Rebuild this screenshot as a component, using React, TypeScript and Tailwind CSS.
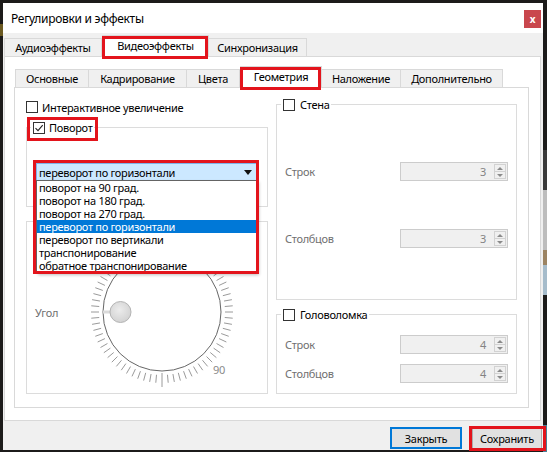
import React from 'react';

const Check = ({ checked }: { checked?: boolean }) => (
  <span className="w-[12px] h-[12px] shrink-0 border border-[#333333] bg-white flex items-center justify-center">
    {checked && (
      <svg width="10" height="10" viewBox="0 0 10 10">
        <path d="M1.5 5.2 L4 7.7 L8.7 2.2" fill="none" stroke="#222" strokeWidth="1.1" />
      </svg>
    )}
  </span>
);

const Spin = ({ value }: { value: string }) => (
  <div className="w-[108px] h-[19px] border border-[#cccccc] bg-[#f0f0f0] flex items-center">
    <span className="flex-1 text-right pr-[8px] text-[#838383]">{value}</span>
    <div className="w-[12px] h-[15px] mr-[1px] border border-[#d2d2d2] flex flex-col">
      <div className="flex-1 flex items-center justify-center border-b border-[#d2d2d2]">
        <svg width="6" height="3" viewBox="0 0 6 3">
          <path d="M0 3 L3 0 L6 3 Z" fill="#8a8a8a" />
        </svg>
      </div>
      <div className="flex-1 flex items-center justify-center">
        <svg width="6" height="3" viewBox="0 0 6 3">
          <path d="M0 0 L6 0 L3 3 Z" fill="#8a8a8a" />
        </svg>
      </div>
    </div>
  </div>
);

const SpinRow = ({ label, value, className }: { label: string; value: string; className: string }) => (
  <div className={`flex items-center justify-between pl-[8px] pr-[8px] ${className}`}>
    <span className="text-[#707070]">{label}</span>
    <Spin value={value} />
  </div>
);

const RedBox = ({ className }: { className: string }) => (
  <div className={`absolute border-[3px] border-[#e3141c] pointer-events-none z-30 ${className}`} />
);

const Dial = () => {
  const cx = 85;
  const cy = 85;
  const ticks = Array.from({ length: 72 }, (_, i) => {
    const a = (i * 5 * Math.PI) / 180;
    const long = i === 18;
    const r1 = long ? 61 : 63;
    const r2 = long ? 75 : 71;
    return {
      x1: cx + Math.cos(a) * r1,
      y1: cy + Math.sin(a) * r1,
      x2: cx + Math.cos(a) * r2,
      y2: cy + Math.sin(a) * r2,
    };
  });
  return (
    <svg width="170" height="170" viewBox="0 0 170 170">
      <defs>
        <radialGradient id="knob" cx="45%" cy="40%" r="60%">
          <stop offset="0%" stopColor="#ececec" />
          <stop offset="100%" stopColor="#d2d2d2" />
        </radialGradient>
      </defs>
      {ticks.map((t, i) => (
        <line key={i} x1={t.x1} y1={t.y1} x2={t.x2} y2={t.y2} stroke="#9a9a9a" strokeWidth="1" />
      ))}
      <circle cx={cx} cy={cy} r="59" fill="white" stroke="#555" strokeWidth="0.9" />
      <line x1="26" y1="85" x2="34" y2="85" stroke="#dadada" strokeWidth="3" />
      <circle cx="43.5" cy="85" r="10.5" fill="url(#knob)" stroke="#b4b4b4" strokeWidth="1" />
      <text x="136" y="147" fontSize="11" fill="#8a8a8a" fontFamily="Noto Sans, sans-serif">
        90
      </text>
    </svg>
  );
};

const dropdownItems = [
  'поворот на 90 град.',
  'поворот на 180 град.',
  'поворот на 270 град.',
  'переворот по горизонтали',
  'переворот по вертикали',
  'транспонирование',
  'обратное транспонирование',
];

const outerTabs = [
  { label: 'Аудиоэффекты', w: 'w-[98px]' },
  { label: 'Видеоэффекты', w: 'w-[107px]', active: true },
  { label: 'Синхронизация', w: 'w-[98px]' },
];

const innerTabs = [
  { label: 'Основные', w: 'w-[74px]' },
  { label: 'Кадрирование', w: 'w-[98px]' },
  { label: 'Цвета', w: 'w-[53px]' },
  { label: 'Геометрия', w: 'w-[82px]', active: true },
  { label: 'Наложение', w: 'w-[79px]' },
  { label: 'Дополнительно', w: 'w-[102px]' },
];

const Tab = ({ label, w, active, first }: { label: string; w: string; active?: boolean; first?: boolean }) =>
  active ? (
    <div className={`relative z-10 -mb-px h-[22px] ${w} bg-white border border-b-0 border-[#d9d9d9] flex items-center justify-center pb-[2px]`}>
      {label}
      <RedBox className="left-[-1px] right-0 top-0 bottom-[-2px]" />
    </div>
  ) : (
    <div
      className={`h-[18px] ${w} bg-[#f0f0f0] border-t border-r ${first ? 'border-l' : ''} border-[#d9d9d9] flex items-center justify-center`}
    >
      {label}
    </div>
  );

export default function App() {
  return (
    <div className="w-[547px] h-[452px] bg-[#1c1b1a] flex overflow-hidden text-[11px] tracking-[-0.3px] text-black font-['Noto_Sans',sans-serif] leading-none">
      <div className="w-[3px] flex flex-col">
        <div className="h-[24px]" />
        <div className="h-[12px] bg-[#6b5a22]" />
      </div>

      <div className="mt-[3px] w-[540px] h-[447px] bg-[#f0f0f0] flex flex-col shrink-0">
        {/* title bar */}
        <div className="h-[30px] bg-white flex items-center justify-between pl-[8px] pr-[2px] pt-[2px] text-[12px]">
          <span>Регулировки и эффекты</span>
          <div className="w-[17px] h-[18px] bg-[#c9474d] text-white text-[10px] font-bold flex items-center justify-center">x</div>
        </div>

        {/* outer tabs */}
        <div className="h-[23px] flex items-end pl-[1px]">
          {outerTabs.map((t, i) => (
            <Tab key={t.label} {...t} first={i === 0} />
          ))}
        </div>

        <div className="ml-[1px] w-[537px] h-[365px] border border-[#d9d9d9] bg-white flex flex-col">
          {/* inner tabs */}
          <div className="h-[30px] flex items-end pl-[10px]">
            {innerTabs.map((t, i) => (
              <Tab key={t.label} {...t} first={i === 0} />
            ))}
          </div>

          <div className="ml-[9px] w-[515px] h-[321px] border border-[#d9d9d9] flex gap-[8px] pl-[11px]">
            {/* left column */}
            <div className="w-[242px] flex flex-col">
              <div className="mt-[13px] flex items-center gap-[4px] h-[12px]">
                <Check />
                <span>Интерактивное увеличение</span>
              </div>

              <div className="mt-[14px] h-[80px] border border-[#dcdcdc] flex flex-col">
                <div className="relative -mt-[7px] ml-[4px] self-start h-[13px] px-[2px] bg-white flex items-center gap-[4px]">
                  <Check checked />
                  <span>Поворот</span>
                  <RedBox className="-left-[4px] -right-[4px] -top-[4px] -bottom-[7px]" />
                </div>
                <div className="relative mt-[29px] ml-[9px] w-[221px] h-[18px] border border-[#7eb4ea] bg-[#cce8ff] flex items-center justify-between pl-[2px] pr-[4px]">
                  <span>переворот по горизонтали</span>
                  <svg width="8" height="5" viewBox="0 0 8 5">
                    <path d="M0 0 L8 0 L4 5 Z" fill="#111" />
                  </svg>
                  <div className="absolute left-[-1px] top-full w-[221px] bg-white border border-[#646464] shadow-[2px_2px_3px_rgba(0,0,0,0.25)] z-20 flex flex-col">
                    {dropdownItems.map((item, i) => (
                      <div
                        key={item}
                        className={`h-[13px] flex items-center pl-[2px] ${i === 3 ? 'bg-[#0078d7] text-white' : ''}`}
                      >
                        {item}
                      </div>
                    ))}
                  </div>
                  <RedBox className="left-[-4px] right-[-3px] top-[-4px] h-[114px]" />
                </div>
              </div>

              <div className="mt-[14px] h-[173px] border border-[#dcdcdc] flex items-center pt-[9px]">
                <span className="ml-[8px] w-[42px] text-[#707070]">Угол</span>
                <Dial />
              </div>
            </div>

            {/* right column */}
            <div className="w-[241px] flex flex-col">
              <div className="mt-[16px] h-[196px] border border-[#dcdcdc] flex flex-col">
                <div className="-mt-[7px] ml-[4px] self-start h-[13px] px-[2px] bg-white flex items-center gap-[5px]">
                  <Check />
                  <span>Стена</span>
                </div>
                <SpinRow label="Строк" value="3" className="mt-[51px]" />
                <SpinRow label="Столбцов" value="3" className="mt-[48px]" />
              </div>

              <div className="mt-[14px] h-[80px] border border-[#dcdcdc] flex flex-col">
                <div className="-mt-[7px] ml-[4px] self-start h-[13px] px-[2px] bg-white flex items-center gap-[5px]">
                  <Check />
                  <span>Головоломка</span>
                </div>
                <SpinRow label="Строк" value="4" className="mt-[14px]" />
                <SpinRow label="Столбцов" value="4" className="mt-[10px]" />
              </div>
            </div>
          </div>
        </div>

        {/* buttons */}
        <div className="h-[29px] flex justify-end items-start pt-[6px] gap-[10px] pr-[1px]">
          <div className="w-[72px] h-[22px] border-2 border-[#0078d7] bg-[#e1e1e1] flex items-center justify-center">
            Закрыть
          </div>
          <div className="relative w-[70px] h-[21px] mt-[1px] border border-[#adadad] bg-[#e1e1e1] flex items-center justify-center">
            Сохранить
            <RedBox className="-left-[4px] -right-[5px] -top-[3px] -bottom-[3px]" />
          </div>
        </div>
      </div>

      <div className="w-[4px] flex flex-col">
        <div className="h-[150px]" />
        <div className="h-[40px] bg-[#3a3a3a]" />
        <div className="h-[60px] bg-[#bdbdbd]" />
        <div className="h-[15px] bg-[#9c8463]" />
        <div className="h-[30px] bg-[#a6bccb]" />
        <div className="h-[130px]" />
        <div className="h-[27px] bg-[#4a7f95]" />
      </div>
    </div>
  );
}
